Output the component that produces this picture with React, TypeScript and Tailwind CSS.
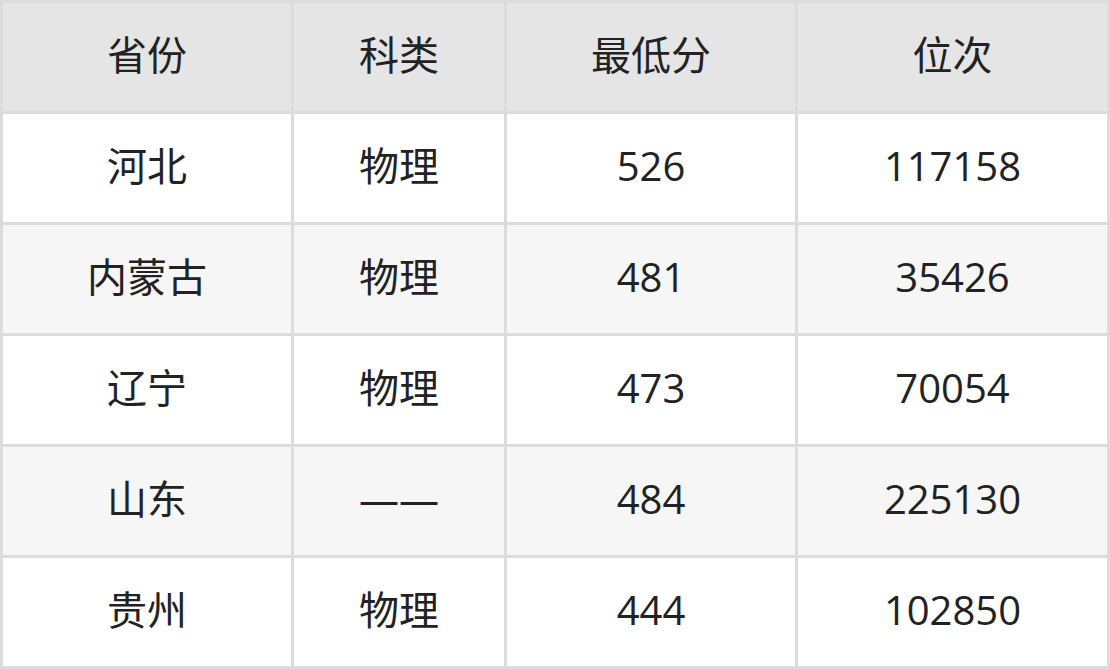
const header = ["省份", "科类", "最低分", "位次"];

const rows = [
  ["河北", "物理", "526", "117158"],
  ["内蒙古", "物理", "481", "35426"],
  ["辽宁", "物理", "473", "70054"],
  ["山东", "——", "484", "225130"],
  ["贵州", "物理", "444", "102850"],
];

export default function App() {
  return (
    <div
      className="w-[1110px] h-[669px] bg-[#dcdcdc] p-[3px] grid grid-cols-[288px_210px_288px_309px] auto-rows-[108px] gap-[3px] text-[40px] text-[#222]"
      style={{ fontFamily: '"Open Sans", "Noto Sans CJK SC", sans-serif' }}
    >
      {header.map((h) => (
        <div key={h} className="bg-[#e5e5e5] flex items-center justify-center pb-[4px]">
          {h}
        </div>
      ))}
      {rows.map((r, i) =>
        r.map((c, j) => (
          <div
            key={`${i}-${j}`}
            className={`${i % 2 === 0 ? "bg-white" : "bg-[#f6f6f6]"} flex items-center justify-center pb-[4px]`}
          >
            {c}
          </div>
        ))
      )}
    </div>
  );
}
